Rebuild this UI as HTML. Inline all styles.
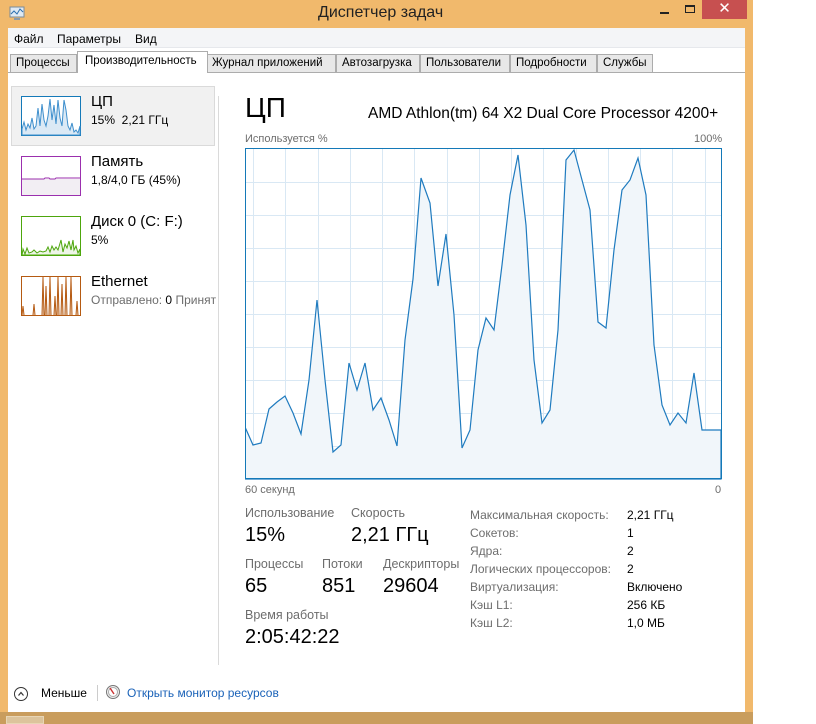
<!DOCTYPE html>
<html><head><meta charset="utf-8"><style>
*{margin:0;padding:0;box-sizing:border-box}
body{width:816px;height:724px;background:#fff;position:relative;overflow:hidden;font-family:"Liberation Sans","DejaVu Sans",sans-serif;font-size:12px;color:#000}
.a{position:absolute;white-space:nowrap}
.g{color:#6d6d6d}
.t{font-size:11.5px}
.l{font-size:12.5px}
</style></head><body>
<div class="a" style="left:0;top:0;width:753px;height:712px;background:#f1b96c"></div>
<div class="a" style="left:0;top:712px;width:753px;height:12px;background:#c99d5d"></div>
<div class="a" style="left:6px;top:716px;width:38px;height:8px;background:#dcc49c;border:1px solid #e8d6b6"></div>
<svg class="a" style="left:8px;top:6px" width="18" height="16"><rect x="2" y="1" width="14" height="10" fill="#dfe9f3" stroke="#7a8a99"/><path d="M3 8 L6 5 L9 8 L12 3 L15 6" stroke="#2a6fb0" fill="none"/><rect x="6" y="12" width="6" height="2" fill="#8a9aa9"/></svg>
<div class="a" style="left:318px;top:4px;font-size:16px;color:#222">Диспетчер задач</div>
<div class="a" style="left:660px;top:12px;width:9px;height:2px;background:#222"></div>
<div class="a" style="left:685px;top:5px;width:10px;height:8px;border:1px solid #222;border-top-width:2px"></div>
<div class="a" style="left:702px;top:0;width:45px;height:19px;background:#c75050;color:#fff;text-align:center;font-size:15px;line-height:18px">✕</div>
<div class="a" style="left:8px;top:28px;width:737px;height:684px;background:#fff"></div>
<div class="a" style="left:8px;top:28px;width:737px;height:20px;background:#f4f5f7;border-bottom:1px solid #e6e8ec"></div>
<div class="a" style="left:14px;top:32px">Файл</div>
<div class="a" style="left:57px;top:32px">Параметры</div>
<div class="a" style="left:135px;top:32px">Вид</div>
<div class="a" style="left:8px;top:72px;width:737px;height:1px;background:#acacac"></div>
<div class="a t" style="left:10px;top:54px;width:67px;height:19px;background:#e8e8e8;border:1px solid #acacac;padding:2px 0 0 5px">Процессы</div>
<div class="a t" style="left:77px;top:51px;width:131px;height:22px;background:#fff;border:1px solid #acacac;border-bottom:none;padding:3px 0 0 7px">Производительность</div>
<div class="a t" style="left:207px;top:54px;width:129px;height:19px;background:#e8e8e8;border:1px solid #acacac;padding:2px 0 0 4px">Журнал приложений</div>
<div class="a t" style="left:336px;top:54px;width:84px;height:19px;background:#e8e8e8;border:1px solid #acacac;padding:2px 0 0 5px">Автозагрузка</div>
<div class="a t" style="left:420px;top:54px;width:90px;height:19px;background:#e8e8e8;border:1px solid #acacac;padding:2px 0 0 5px">Пользователи</div>
<div class="a t" style="left:510px;top:54px;width:87px;height:19px;background:#e8e8e8;border:1px solid #acacac;padding:2px 0 0 5px">Подробности</div>
<div class="a t" style="left:597px;top:54px;width:56px;height:19px;background:#e8e8e8;border:1px solid #acacac;padding:2px 0 0 5px">Службы</div>

<div class="a" style="left:11px;top:86px;width:204px;height:60px;background:#f1f1f1;border:1px solid #dadada"></div>
<div class="a" style="left:218px;top:96px;width:1px;height:569px;background:#dadada"></div>
<svg class="a" style="left:21px;top:96px" width="60" height="40"><rect x="0.5" y="0.5" width="59" height="39" fill="#fff" stroke="#1479b8"/><path d="M1 39 L1 33 L3 26 L5 34 L7 28 L9 32 L11 22 L13 33 L15 30 L17 12 L19 30 L21 8 L23 24 L25 30 L27 20 L29 3 L31 24 L33 9 L35 28 L37 4 L39 22 L41 30 L43 4 L45 14 L47 30 L49 34 L51 27 L53 36 L55 34 L57 37 L59 30 L59 39Z" fill="#dbe9f5" stroke="#3e8fcd"/></svg>
<div class="a" style="left:91px;top:93px;font-size:15px">ЦП</div>
<div class="a" style="left:91px;top:113px">15%&nbsp; 2,21 ГГц</div>
<svg class="a" style="left:21px;top:156px" width="60" height="40"><rect x="0.5" y="0.5" width="59" height="39" fill="#fff" stroke="#9b2fae"/><rect x="1" y="23" width="58" height="16" fill="#f2eef3"/><path d="M1 23 H23 L24 22 H28 L29 23 H34 L35 22 H59" stroke="#9b2fae" fill="none"/></svg>
<div class="a" style="left:91px;top:153px;font-size:15px">Память</div>
<div class="a" style="left:91px;top:173px">1,8/4,0 ГБ (45%)</div>
<svg class="a" style="left:21px;top:216px" width="60" height="40"><rect x="0.5" y="0.5" width="59" height="39" fill="#fff" stroke="#4da60c"/><path d="M1 39 L2 33 L4 38 L6 32 L8 37 L11 36 L13 34 L16 37 L19 35 L22 36 L25 35 L27 31 L29 36 L31 30 L33 34 L35 31 L37 34 L40 24 L42 36 L44 28 L46 32 L48 25 L50 34 L52 24 L53 34 L55 30 L57 37 L59 33 L59 39Z" fill="#eef5e8" stroke="#4da60c"/></svg>
<div class="a" style="left:91px;top:213px;font-size:15px">Диск 0 (C: F:)</div>
<div class="a" style="left:91px;top:233px">5%</div>
<svg class="a" style="left:21px;top:276px" width="60" height="40"><rect x="0.5" y="0.5" width="59" height="39" fill="#fff" stroke="#b55a12"/><rect x="1" y="1" width="58" height="38" fill="#fff"/><path d="M1 39 L2 30 L3 39 M12 39 L13 28 L14 39 M21 39 L22 1 L23 39 M24 39 L25 10 L26 39 M28 39 L29 1 L30 39 M33 39 L34 20 L35 39 M36 39 L37 1 L38 39 M40 39 L41 8 L42 39 M44 39 L45 1 L46 39 M49 39 L50 1 L51 39 M55 39 L56 25 L57 39" stroke="#b55a12" fill="#f3e2d2"/><rect x="0.5" y="0.5" width="59" height="39" fill="none" stroke="#b55a12"/></svg>
<div class="a" style="left:91px;top:273px;font-size:15px">Ethernet</div>
<div class="a g" style="left:91px;top:293px;width:126px;overflow:hidden">Отправлено: <span style="color:#000">0</span> Принят</div>

<div class="a" style="left:245px;top:92px;font-size:28px">ЦП</div>
<div class="a" style="left:368px;top:105px;font-size:15.5px">AMD Athlon(tm) 64 X2 Dual Core Processor 4200+</div>
<div class="a g" style="left:245px;top:133px;font-size:11px">Используется %</div>
<div class="a g" style="left:694px;top:133px;font-size:11px">100%</div>
<svg class="a" style="left:245px;top:148px" width="477" height="332">
<g stroke="#d9e8f4" stroke-width="1">
<path d="M0 34.5H477M0 67.5H477M0 100.5H477M0 133.5H477M0 166.5H477M0 199.5H477M0 232.5H477M0 265.5H477M0 298.5H477"/>
<path d="M8.5 0V331M40.5 0V331M73.5 0V331M105.5 0V331M137.5 0V331M169.5 0V331M202.5 0V331M234.5 0V331M266.5 0V331M298.5 0V331M331.5 0V331M363.5 0V331M395.5 0V331M427.5 0V331M460.5 0V331"/>
</g>
<path d="M0 279 L8 297 L16 295 L24 261 L32 254 L40 248 L48 265 L56 286 L64 232 L72 152 L80 232 L88 304 L96 297 L104 215 L112 242 L120 215 L128 262 L136 250 L144 272 L152 298 L160 192 L168 131 L176 30 L185 55 L193 138 L201 86 L209 167 L217 300 L225 282 L233 202 L241 170 L249 182 L257 117 L265 47 L273 7 L281 77 L289 212 L297 275 L305 262 L313 182 L321 12 L329 2 L337 32 L345 62 L353 174 L361 180 L369 102 L377 42 L385 32 L393 10 L401 47 L409 197 L417 257 L425 277 L433 265 L441 275 L449 225 L457 282 L465 282 L476 282 L476 331 L0 331Z" fill="#f1f6fa" stroke="#1f7bbf" stroke-width="1.2"/>
<rect x="0.5" y="0.5" width="476" height="330" fill="none" stroke="#1479b8"/>
</svg>
<div class="a g" style="left:245px;top:484px;font-size:11px">60 секунд</div>
<div class="a g" style="left:715px;top:484px;font-size:11px">0</div>

<div class="a g l" style="left:245px;top:506px">Использование</div>
<div class="a g l" style="left:351px;top:506px">Скорость</div>
<div class="a" style="left:245px;top:524px;font-size:20px">15%</div>
<div class="a" style="left:351px;top:524px;font-size:20px">2,21 ГГц</div>
<div class="a g l" style="left:245px;top:557px">Процессы</div>
<div class="a g l" style="left:322px;top:557px">Потоки</div>
<div class="a g l" style="left:383px;top:557px">Дескрипторы</div>
<div class="a" style="left:245px;top:575px;font-size:20px">65</div>
<div class="a" style="left:322px;top:575px;font-size:20px">851</div>
<div class="a" style="left:383px;top:575px;font-size:20px">29604</div>
<div class="a g l" style="left:245px;top:608px">Время работы</div>
<div class="a" style="left:245px;top:626px;font-size:20px">2:05:42:22</div>

<div class="a g" style="left:470px;top:506px;line-height:18px">Максимальная скорость:<br>Сокетов:<br>Ядра:<br>Логических процессоров:<br>Виртуализация:<br>Кэш L1:<br>Кэш L2:</div>
<div class="a" style="left:627px;top:506px;line-height:18px">2,21 ГГц<br>1<br>2<br>2<br>Включено<br>256 КБ<br>1,0 МБ</div>

<svg class="a" style="left:9px;top:683px" width="22" height="22"><circle cx="12" cy="11" r="6.5" fill="none" stroke="#333"/><path d="M9.5 12.5 L12 9.5 L14.5 12.5" fill="none" stroke="#333" stroke-width="1.2"/></svg>
<div class="a" style="left:41px;top:686px">Меньше</div>
<div class="a" style="left:97px;top:685px;width:1px;height:16px;background:#ccc"></div>
<svg class="a" style="left:105px;top:684px" width="16" height="16"><circle cx="8" cy="8" r="6.5" fill="#eee" stroke="#777"/><circle cx="8" cy="8" r="4.5" fill="#fff" stroke="#aaa"/><path d="M5 4 L9 10" stroke="#c33" stroke-width="1.4"/></svg>
<div class="a" style="left:127px;top:686px;color:#1a62b8">Открыть монитор ресурсов</div>
</body></html>
